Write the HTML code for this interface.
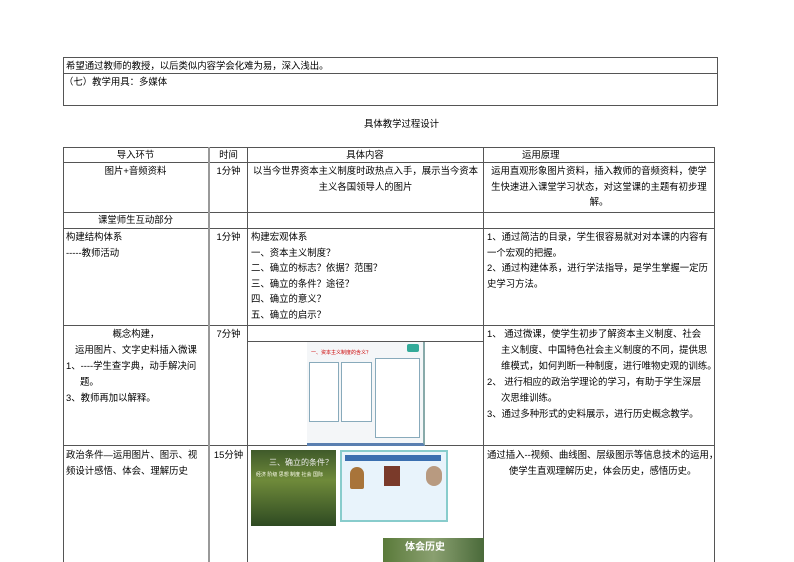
<!DOCTYPE html>
<html><head><meta charset="utf-8"><style>
*{margin:0;padding:0;box-sizing:border-box}
body{width:794px;height:562px;background:#fff;position:relative;overflow:hidden;font-family:"Liberation Sans","Noto Sans CJK SC",sans-serif;font-size:9.4px;color:#000;line-height:15.5px}
.a{position:absolute;white-space:nowrap}
.h{position:absolute;height:1px;background:#555}
.v{position:absolute;width:1px;background:#555}
.c{text-align:center}
</style></head><body>
<div class="h" style="left:63px;top:57px;width:655px"></div>
<div class="h" style="left:63px;top:73px;width:655px"></div>
<div class="h" style="left:63px;top:105px;width:655px"></div>
<div class="v" style="left:63px;top:57px;height:49px"></div>
<div class="v" style="left:717px;top:57px;height:49px"></div>
<div class="a" style="left:66px;top:58px">希望通过教师的教授，以后类似内容学会化难为易，深入浅出。</div>
<div class="a" style="left:64px;top:74px">（七）教学用具：多媒体</div>
<div class="a" style="left:364px;top:116px">具体教学过程设计</div>

<div class="h" style="left:63px;top:147px;width:652px"></div>
<div class="h" style="left:63px;top:162px;width:652px"></div>
<div class="h" style="left:63px;top:212px;width:652px"></div>
<div class="h" style="left:63px;top:228px;width:652px"></div>
<div class="h" style="left:63px;top:325px;width:652px"></div>
<div class="h" style="left:247px;top:341px;width:237px"></div>
<div class="h" style="left:63px;top:445px;width:652px"></div>
<div class="v" style="left:63px;top:147px;height:415px"></div>
<div class="v" style="left:208px;top:147px;height:415px;background:#999;width:2px"></div>
<div class="v" style="left:247px;top:147px;height:415px"></div>
<div class="v" style="left:483px;top:147px;height:415px"></div>
<div class="v" style="left:714px;top:147px;height:415px"></div>

<div class="a c" style="left:63px;width:145px;top:147px">导入环节</div>
<div class="a c" style="left:210px;width:37px;top:147px">时间</div>
<div class="a c" style="left:247px;width:236px;top:147px">具体内容</div>
<div class="a" style="left:522px;top:147px">运用原理</div>

<div class="a c" style="left:63px;width:145px;top:163px">图片+音频资料</div>
<div class="a c" style="left:210px;width:37px;top:163px">1分钟</div>
<div class="a c" style="left:248px;width:235px;top:163px">以当今世界资本主义制度时政热点入手，展示当今资本<br>主义各国领导人的图片</div>
<div class="a c" style="left:484px;width:230px;top:163px">运用直观形象图片资料，插入教师的音频资料，使学<br>生快速进入课堂学习状态，对这堂课的主题有初步理<br>解。</div>

<div class="a c" style="left:63px;width:145px;top:212px">课堂师生互动部分</div>

<div class="a" style="left:66px;top:229px">构建结构体系<br>-----教师活动</div>
<div class="a c" style="left:210px;width:37px;top:229px">1分钟</div>
<div class="a" style="left:251px;top:229px">构建宏观体系<br>一、资本主义制度？<br>二、确立的标志？依据？范围？<br>三、确立的条件？途径？<br>四、确立的意义？<br>五、确立的启示？</div>
<div class="a" style="left:487px;top:229px">1、通过简洁的目录，学生很容易就对对本课的内容有<br>一个宏观的把握。<br>2、通过构建体系，进行学法指导，是学生掌握一定历<br>史学习方法。</div>

<div class="a" style="left:66px;top:326px;width:140px;line-height:16px"><div class="c">概念构建，</div><div class="c">运用图片、文字史料插入微课</div><div>1、----学生查字典，动手解决问</div><div style="padding-left:14px">题。</div><div>3、教师再加以解释。</div></div>
<div class="a c" style="left:210px;width:37px;top:326px">7分钟</div>
<div class="a" style="left:487px;top:326px;line-height:16px"><div>1、 通过微课，使学生初步了解资本主义制度、社会</div><div style="padding-left:14px">主义制度、中国特色社会主义制度的不同，提供思</div><div style="padding-left:14px">维模式，如何判断一种制度，进行唯物史观的训练。</div><div>2、 进行相应的政治学理论的学习，有助于学生深层</div><div style="padding-left:14px">次思维训练。</div><div>3、通过多种形式的史料展示，进行历史概念教学。</div></div>

<div class="a" style="left:307px;top:342px;width:118px;height:104px;background:#f4f6f8;border-right:2px solid #8aa;border-bottom:3px solid #5a7fb0">
<div class="a" style="left:100px;top:2px;width:12px;height:8px;background:#3a9;border-radius:2px"></div>
<div class="a" style="left:4px;top:8px;font-size:5px;line-height:6px;color:#c00">一、资本主义制度的含义？</div>
<div class="a" style="left:2px;top:20px;width:30px;height:60px;border:1px solid #8ab;background:#fff"></div>
<div class="a" style="left:34px;top:20px;width:31px;height:60px;border:1px solid #8ab;background:#fff"></div>
<div class="a" style="left:68px;top:16px;width:45px;height:80px;border:1px solid #8ab;background:#fff"></div>
</div>

<div class="a" style="left:66px;top:447px;line-height:16px">政治条件—运用图片、图示、视<br>频设计感悟、体会、理解历史</div>
<div class="a c" style="left:210px;width:37px;top:447px">15分钟</div>
<div class="a" style="left:487px;top:447px;line-height:16px">通过插入--视频、曲线图、层级图示等信息技术的运用，<div class="c">使学生直观理解历史，体会历史，感悟历史。</div></div>

<div class="a" style="left:251px;top:450px;width:85px;height:76px;background:linear-gradient(180deg,#3f5a2a,#6f8a3a 40%,#2e4a22);">
<div class="a" style="left:18px;top:8px;font-size:8px;line-height:10px;color:#eee">三、确立的条件？</div>
<div class="a" style="left:5px;top:22px;font-size:5px;line-height:6px;color:#ffe">经济 阶级 思想 制度 社会 国际</div></div>
<div class="a" style="left:340px;top:450px;width:108px;height:72px;background:#e8f3fb;border:2px solid #8cc">
<div class="a" style="left:3px;top:3px;width:96px;height:6px;background:#3a6fb0"></div>
<div class="a" style="left:8px;top:15px;width:14px;height:22px;background:#a8743a;border-radius:7px 7px 2px 2px"></div>
<div class="a" style="left:42px;top:14px;width:16px;height:20px;background:#7a3a2a"></div>
<div class="a" style="left:84px;top:14px;width:16px;height:20px;background:#b89a80;border-radius:8px"></div>
</div>
<div class="a" style="left:383px;top:538px;width:101px;height:24px;background:linear-gradient(90deg,#5a7a3a,#8aa070,#4a6a3a)">
<div class="a" style="left:22px;top:2px;font-size:10px;font-weight:bold;color:#fff">体会历史</div></div>
</body></html>
